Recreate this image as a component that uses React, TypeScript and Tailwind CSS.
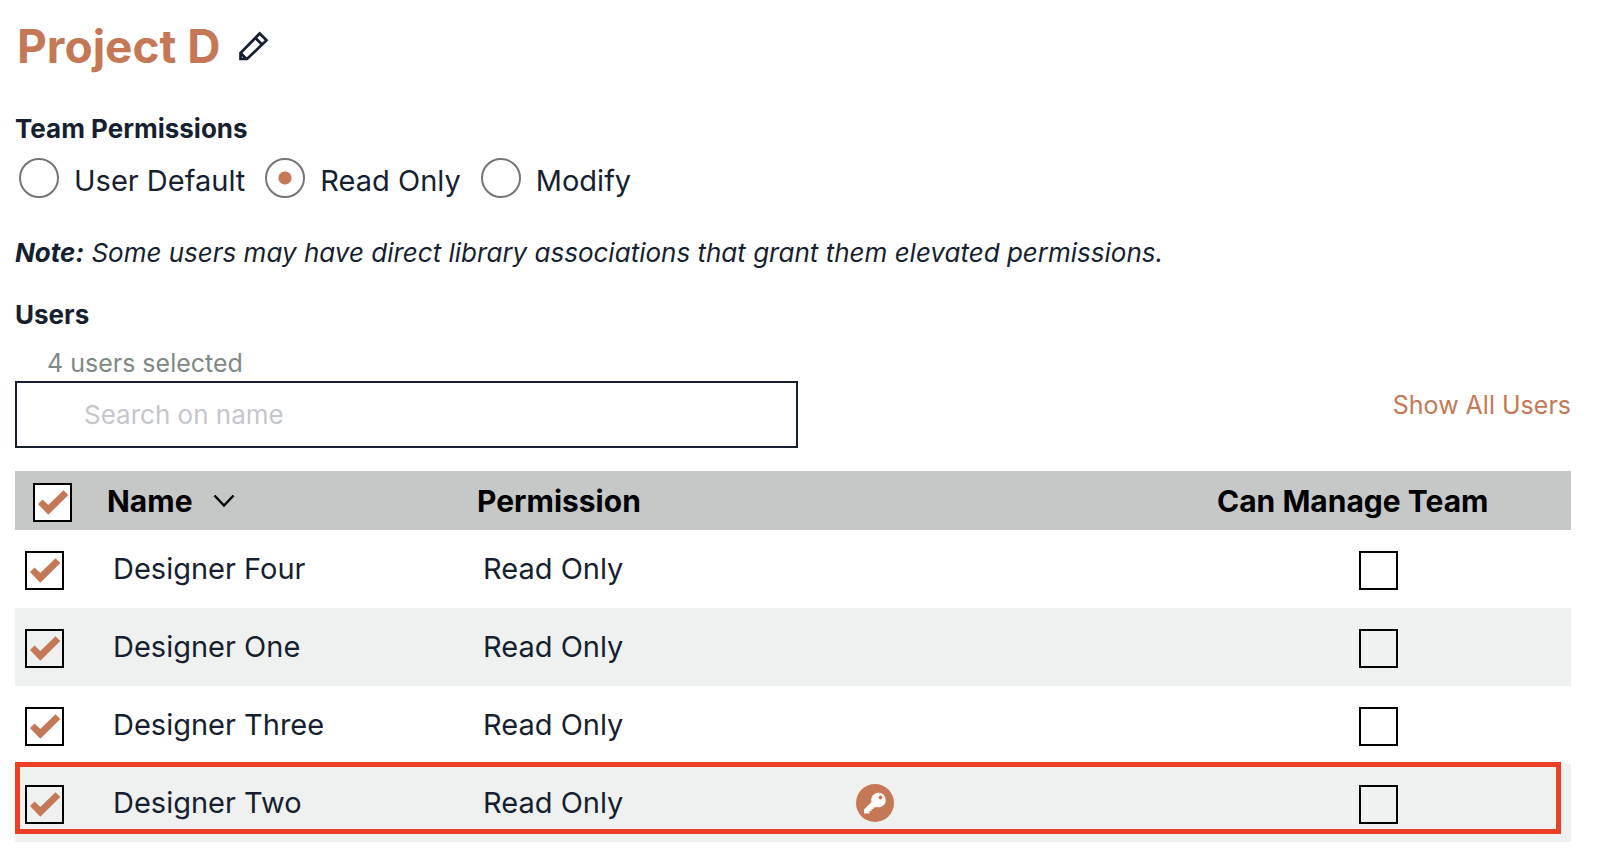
import { useState } from "react";

const users = ["Designer Four", "Designer One", "Designer Three", "Designer Two"];
const levels = ["User Default", "Read Only", "Modify"];

function CheckBox({ label, on = false, fill = "bg-transparent" }: { label: string; on?: boolean; fill?: string }) {
  return (
    <span className="inline-grid align-middle">
      <input
        type="checkbox"
        defaultChecked={on}
        aria-label={label}
        className={`peer col-start-1 row-start-1 size-[39px] appearance-none border-2 border-black ${fill}`}
      />
      <svg viewBox="0 0 39 39" className="pointer-events-none invisible col-start-1 row-start-1 size-[39px] peer-checked:visible">
        <path d="M5 21 9.5 16.5 15.3 22 30.5 7.2 35.3 12 15.3 31.8Z" fill="#c57855" />
      </svg>
    </span>
  );
}

export default function App() {
  const [level, setLevel] = useState("Read Only");
  return (
    <main className="min-h-screen bg-white pl-[15px] pr-[29px] pt-[19px] font-['Inter',sans-serif] text-[#161f31]">
      <header className="flex items-center gap-[18px] pl-0.5">
        <h1 className="text-[46px] leading-[54px] font-bold text-[#c57855]">Project D</h1>
        <button aria-label="Rename project">
          <svg viewBox="0 0 30 30" className="size-[30px]" fill="none" stroke="#161f31" strokeWidth="2.7">
            <path d="M1.500 28V22L20.700 2.500 27.500 9.300 8 28ZM16.500 7l6.500 6.500M2 22.500l5.500 5.500" />
          </svg>
        </button>
      </header>

      <fieldset className="mt-10">
        <legend className="text-[26px] leading-8 font-bold">Team Permissions</legend>
        <div className="flex items-center gap-5 pt-2.5 pl-1">
          {levels.map((name) => (
            <label key={name} className="flex items-center gap-[15px] text-[29px] leading-10">
              <input
                type="radio"
                name="level"
                checked={level === name}
                onChange={() => setLevel(name)}
                className="size-10 appearance-none rounded-full border-2 border-[#757575] checked:bg-[radial-gradient(circle,#c57855_6px,transparent_7px)]"
              />
              <span className="pt-1.5">{name}</span>
            </label>
          ))}
        </div>
      </fieldset>

      <p className="mt-9 text-[26px] leading-8 italic">
        <strong>Note:</strong> Some users may have direct library associations that grant them elevated permissions.
      </p>

      <h2 className="mt-[30px] text-[26px] leading-8 font-bold">Users</h2>
      <p className="mt-3.5 pl-8 text-[25px] leading-9 text-[#7f8984]">4 users selected</p>
      <div className="flex items-start justify-between">
        <input
          type="text"
          aria-label="Search on name"
          placeholder="Search on name"
          className="h-[67px] w-[783px] border-2 border-[#161f31] pl-[67px] text-[26px] placeholder:text-[#c5c6cb]"
        />
        <a href="#all" className="pt-2 text-[25px] leading-8 text-[#c57855]">Show All Users</a>
      </div>

      <table className="mt-[23px] w-full table-fixed border-collapse text-left">
        <colgroup>
          <col className="w-[88px]" />
          <col className="w-[370px]" />
          <col className="w-[370px]" />
          <col />
          <col className="w-[358px]" />
        </colgroup>
        <thead>
          <tr className="h-[59px] bg-[#c5c8c7] text-[30px] leading-10 text-black">
            <th className="pl-[18px]"><CheckBox label="Select all users" on fill="bg-white" /></th>
            <th className="pl-1 font-bold">
              <button className="flex items-center gap-5">
                Name
                <svg viewBox="0 0 22 14" className="w-[22px]" fill="none" stroke="currentColor" strokeWidth="2.400">
                  <path d="M1.500 1.500 11 11.500 20.500 1.500" />
                </svg>
              </button>
            </th>
            <th className="pl-1 font-bold">Permission</th>
            <th />
            <th className="pl-1 font-bold">Can Manage Team</th>
          </tr>
        </thead>
        <tbody className="text-[29px] leading-10">
          {users.map((name) => (
            <tr key={name} className="relative h-[78px] even:bg-[#eff1f0]">
              <td className="pl-[10px]">
                <CheckBox label={`Select ${name}`} on />
                {name === "Designer Two" && (
                  <span className="pointer-events-none absolute -top-0.5 right-[10px] bottom-2 left-0 border-5 border-[#eb4025]" />
                )}
              </td>
              <td className="pl-[10px]">{name}</td>
              <td className="pl-[10px]">Read Only</td>
              <td className="pl-[13px]">
                {name === "Designer Two" && (
                  <svg viewBox="0 0 38 38" className="size-[38px]" role="img" aria-label="Direct library access">
                    <circle cx="19" cy="19" r="19" fill="#c57855" />
                    <path d="M8 29V25.500L15.500 18A7.300 7.300 0 1 1 20.500 23L19 23.500H17.500V25H15.500V27H13.500V29.500H8.500Z" fill="#fff" />
                    <circle cx="24.500" cy="13.500" r="1.900" fill="#c57855" />
                  </svg>
                )}
              </td>
              <td className="pl-[146px]"><CheckBox label={`${name} can manage team`} /></td>
            </tr>
          ))}
        </tbody>
      </table>
    </main>
  );
}
